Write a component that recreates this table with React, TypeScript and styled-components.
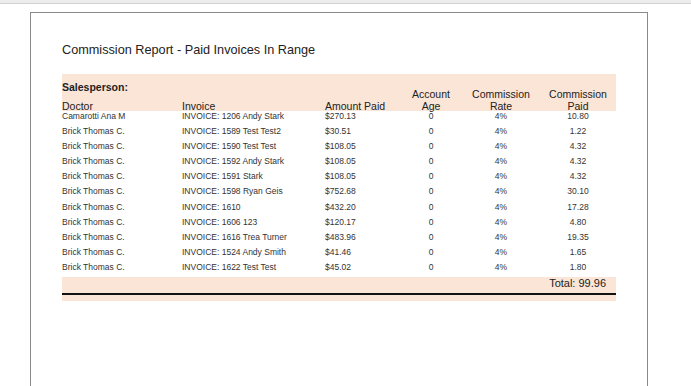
import styled, { createGlobalStyle } from 'styled-components';

const GlobalStyle = createGlobalStyle`
  html, body {
    margin: 0;
    padding: 0;
    background: #fff;
    font-family: 'Liberation Sans', Arial, sans-serif;
  }
`;

type Invoice = {
  doctor: string;
  invoice: string;
  amount: string;
  age: string;
  rate: string;
  paid: string;
};

const rows: Invoice[] = [
  { doctor: 'Camarotti Ana M', invoice: 'INVOICE: 1206 Andy Stark', amount: '$270.13', age: '0', rate: '4%', paid: '10.80' },
  { doctor: 'Brick Thomas C.', invoice: 'INVOICE: 1589 Test Test2', amount: '$30.51', age: '0', rate: '4%', paid: '1.22' },
  { doctor: 'Brick Thomas C.', invoice: 'INVOICE: 1590 Test Test', amount: '$108.05', age: '0', rate: '4%', paid: '4.32' },
  { doctor: 'Brick Thomas C.', invoice: 'INVOICE: 1592 Andy Stark', amount: '$108.05', age: '0', rate: '4%', paid: '4.32' },
  { doctor: 'Brick Thomas C.', invoice: 'INVOICE: 1591 Stark', amount: '$108.05', age: '0', rate: '4%', paid: '4.32' },
  { doctor: 'Brick Thomas C.', invoice: 'INVOICE: 1598 Ryan Geis', amount: '$752.68', age: '0', rate: '4%', paid: '30.10' },
  { doctor: 'Brick Thomas C.', invoice: 'INVOICE: 1610', amount: '$432.20', age: '0', rate: '4%', paid: '17.28' },
  { doctor: 'Brick Thomas C.', invoice: 'INVOICE: 1606 123', amount: '$120.17', age: '0', rate: '4%', paid: '4.80' },
  { doctor: 'Brick Thomas C.', invoice: 'INVOICE: 1616 Trea Turner', amount: '$483.96', age: '0', rate: '4%', paid: '19.35' },
  { doctor: 'Brick Thomas C.', invoice: 'INVOICE: 1524 Andy Smith', amount: '$41.46', age: '0', rate: '4%', paid: '1.65' },
  { doctor: 'Brick Thomas C.', invoice: 'INVOICE: 1622 Test Test', amount: '$45.02', age: '0', rate: '4%', paid: '1.80' },
];

const App = () => {
  return (
    <>
      <GlobalStyle />
      <TopBar />
      <Viewer>
        <Sheet>
          <Title>Commission Report - Paid Invoices In Range</Title>
          <HeaderBand>
            <Salesperson>Salesperson:</Salesperson>
            <ColHead>Doctor</ColHead>
            <ColHead>Invoice</ColHead>
            <ColHead>Amount Paid</ColHead>
            <StackHead>
              Account
              <br />
              Age
            </StackHead>
            <StackHead>
              Commission
              <br />
              Rate
            </StackHead>
            <StackHead>
              Commission
              <br />
              Paid
            </StackHead>
          </HeaderBand>
          {rows.map((r, i) => (
            <Row key={i}>
              <Cell>{r.doctor}</Cell>
              <Cell>{r.invoice}</Cell>
              <Cell>{r.amount}</Cell>
              <Cell $center>{r.age}</Cell>
              <Cell $center>{r.rate}</Cell>
              <Cell $center>{r.paid}</Cell>
            </Row>
          ))}
          <FooterBand>
            <TotalRow>Total: 99.96</TotalRow>
          </FooterBand>
        </Sheet>
      </Viewer>
    </>
  );
};

export default App;

const columns = '120px 143px 80px 52px 88px 66px 1fr';

const TopBar = styled.div`
  height: 3px;
  background: #ececec;
  border-bottom: 1px solid #d2d2d2;
`;

const Viewer = styled.div`
  padding: 8px 0 0 30px;
  height: 382px;
  overflow: hidden;
  box-sizing: border-box;
`;

const Sheet = styled.div`
  width: 618px;
  min-height: 420px;
  box-sizing: border-box;
  border: 1px solid #8a8a8a;
  padding: 30px 31px 0;
`;

const Title = styled.h1`
  margin: 0 0 16px;
  font-size: 12.7px;
  line-height: 15px;
  font-weight: normal;
  color: #222;
`;

const HeaderBand = styled.div`
  display: grid;
  grid-template-columns: ${columns};
  grid-template-rows: 19px 11px;
  height: 37px;
  box-sizing: border-box;
  padding-top: 7px;
  background: #fbe5d6;
  color: #222;
  font-size: 10.5px;
`;

const Salesperson = styled.div`
  grid-column: 1 / 4;
  grid-row: 1;
  font-weight: bold;
  line-height: 12px;
`;

const ColHead = styled.div`
  grid-row: 2;
  line-height: 12px;
  white-space: nowrap;
`;

const StackHead = styled.div`
  grid-row: 1 / 3;
  align-self: end;
  margin-bottom: -1px;
  text-align: center;
  line-height: 11.5px;
`;

const Row = styled.div`
  display: grid;
  grid-template-columns: ${columns};
  height: 15.1px;
  font-size: 8.5px;
  line-height: 10px;
  color: #333;
`;

const Cell = styled.div<{ $center?: boolean }>`
  white-space: nowrap;
  text-align: ${({ $center }) => ($center ? 'center' : 'left')};
`;

const FooterBand = styled.div`
  background: #fbe5d6;
  padding-bottom: 6px;
`;

const TotalRow = styled.div`
  height: 15.5px;
  box-sizing: content-box;
  border-bottom: 2px solid #111;
  padding-right: 10px;
  text-align: right;
  font-size: 11px;
  line-height: 12px;
  color: #222;
`;
